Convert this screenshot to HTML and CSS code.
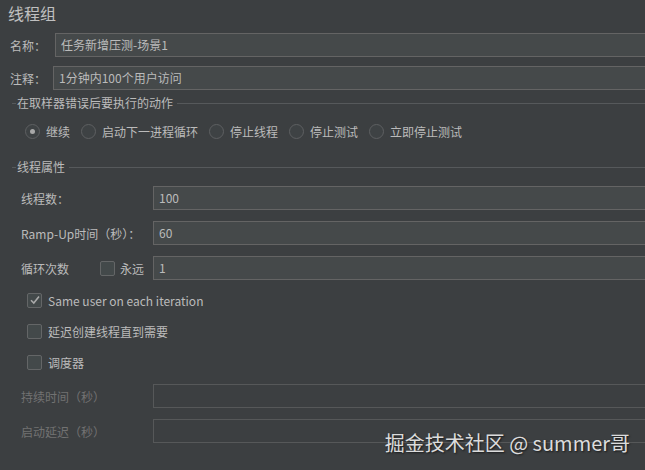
FILE: index.html
```html
<!DOCTYPE html>
<html lang="zh-CN">
<head>
    <meta charset="UTF-8">
    <title>线程组</title>
    <link rel="stylesheet" href="styles.css">
</head>
<body>
    <div class="panel">
        <div class="title">线程组</div>

        <div class="row row-name">
            <span class="label">名称：</span>
            <div class="field">任务新增压测-场景1</div>
        </div>
        <div class="row row-comment">
            <span class="label">注释：</span>
            <div class="field">1分钟内100个用户访问</div>
        </div>

        <div class="group-head head-error">
            <span class="head-stub"></span>
            <span class="head-text">在取样器错误后要执行的动作</span>
            <span class="head-line"></span>
        </div>
        <div class="radios">
            <label class="radio"><span class="circle checked"></span>继续</label>
            <label class="radio"><span class="circle"></span>启动下一进程循环</label>
            <label class="radio"><span class="circle"></span>停止线程</label>
            <label class="radio"><span class="circle"></span>停止测试</label>
            <label class="radio"><span class="circle"></span>立即停止测试</label>
        </div>

        <div class="group-head head-props">
            <span class="head-stub"></span>
            <span class="head-text">线程属性</span>
            <span class="head-line"></span>
        </div>

        <div class="prop first">
            <span class="prop-label">线程数：</span>
            <div class="field">100</div>
        </div>
        <div class="prop">
            <span class="prop-label">Ramp-Up时间（秒）：</span>
            <div class="field">60</div>
        </div>
        <div class="prop">
            <span class="prop-label loop-label">
                <span class="loop-text">循环次数</span>
                <span class="box"></span>
                <span class="forever">永远</span>
            </span>
            <div class="field">1</div>
        </div>

        <div class="check first-check">
            <span class="box checked">
                <svg width="12" height="12" viewBox="0 0 12 12"><path d="M2 6.2 L4.8 9 L10 2.6" fill="none" stroke="#a9a9a9" stroke-width="1.6"/></svg>
            </span>
            <span class="check-text">Same user on each iteration</span>
        </div>
        <div class="check">
            <span class="box"></span>
            <span class="check-text">延迟创建线程直到需要</span>
        </div>
        <div class="check">
            <span class="box"></span>
            <span class="check-text">调度器</span>
        </div>

        <div class="prop disabled first-disabled">
            <span class="prop-label">持续时间（秒）</span>
            <div class="field"></div>
        </div>
        <div class="prop disabled">
            <span class="prop-label">启动延迟（秒）</span>
            <div class="field"></div>
        </div>
    </div>

    <div class="watermark">掘金技术社区 @ summer哥</div>
</body>
</html>
```

FILE: styles.css
```css
body {
    margin: 0;
    background-color: #3c3f41;
    color: #bbbbbb;
    font-family: "Noto Sans CJK SC", "Noto Sans", sans-serif;
    font-size: 12px;
    width: 645px;
    height: 470px;
    overflow: hidden;
    position: relative;
}
.panel {
    overflow: hidden;
}
.title {
    height: 26px;
    line-height: 26px;
    font-size: 16px;
    padding-left: 8px;
    color: #c0c0c0;
}
.row {
    display: flex;
    align-items: center;
    height: 24px;
    padding-left: 10px;
    margin-right: -20px;
}
.row-name {
    margin-top: 7px;
}
.row-name .label {
    width: 45px;
}
.row-comment {
    margin-top: 9px;
}
.row-comment .label {
    width: 43px;
}
.field {
    flex: 1;
    height: 22px;
    line-height: 22px;
    background-color: #45494a;
    border: 1px solid #646464;
    padding-left: 5px;
    color: #bbbbbb;
    white-space: nowrap;
}
.group-head {
    display: flex;
    align-items: center;
    height: 14px;
    line-height: 14px;
    padding-left: 12px;
}
.head-error {
    margin-top: 6px;
}
.head-props {
    margin-top: 19px;
}
.head-stub {
    width: 4px;
    height: 1px;
    background-color: #56595b;
    margin-right: 1px;
}
.head-text {
    margin-right: 4px;
}
.head-line {
    flex: 1;
    height: 1px;
    background-color: #56595b;
}
.radios {
    display: flex;
    align-items: center;
    gap: 11px;
    height: 20px;
    margin-top: 11px;
    padding-left: 25px;
}
.radio {
    display: flex;
    align-items: center;
    gap: 6px;
}
.circle {
    width: 13px;
    height: 13px;
    border: 1px solid #5e6062;
    border-radius: 50%;
    background-color: #3e4244;
    position: relative;
}
.circle.checked::after {
    content: "";
    position: absolute;
    left: 4px;
    top: 4px;
    width: 5px;
    height: 5px;
    border-radius: 50%;
    background-color: #a8a8a8;
}
.prop {
    display: flex;
    align-items: center;
    height: 24px;
    margin-top: 11px;
    padding-left: 21px;
    margin-right: -20px;
}
.prop.first {
    margin-top: 12px;
}
.prop-label {
    width: 132px;
    flex-shrink: 0;
    display: flex;
    align-items: center;
}
.loop-text {
    width: 79px;
}
.forever {
    margin-left: 5px;
}
.box {
    width: 13px;
    height: 13px;
    border: 1px solid #646667;
    border-radius: 2px;
    background-color: #43494a;
    display: flex;
    align-items: center;
    justify-content: center;
    flex-shrink: 0;
}
.check {
    display: flex;
    align-items: center;
    gap: 6px;
    height: 20px;
    margin-top: 11px;
    padding-left: 27px;
}
.check.first-check {
    margin-top: 10px;
}
.prop.disabled {
    color: #727272;
}
.prop.first-disabled {
    margin-top: 12px;
}
.prop.disabled .field {
    background-color: #3c3f41;
    border-color: #565859;
}
.watermark {
    position: absolute;
    right: 15px;
    bottom: 13px;
    font-size: 20px;
    color: #dcdcdc;
    text-shadow: 1px 1px 2px rgba(0, 0, 0, 0.6);
    white-space: nowrap;
}
```
